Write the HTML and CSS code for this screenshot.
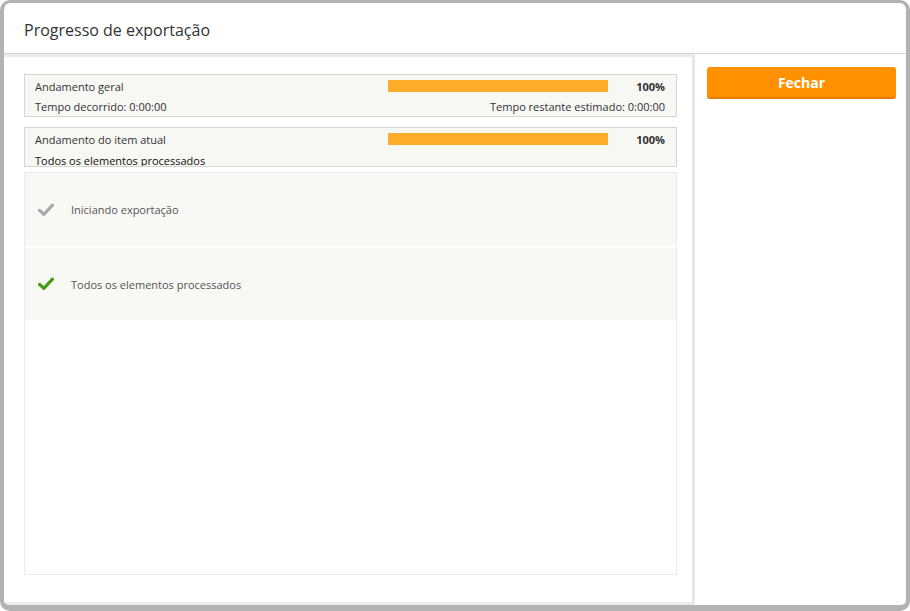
FILE: index.html
```html
<!DOCTYPE html>
<html lang="pt">
<head>
<meta charset="utf-8">
<title>Progresso de exportação</title>
<link rel="stylesheet" href="styles.css">
</head>
<body>
<div class="dialog">
  <div class="header"><h1 class="title">Progresso de exportação</h1></div>
  <div class="body">
    <div class="main">
      <div class="progress-box">
        <div class="line">
          <span class="label">Andamento geral</span>
          <div class="bar"><div class="fill" style="width:100%"></div></div>
          <span class="pct">100%</span>
        </div>
        <div class="line">
          <span class="label">Tempo decorrido: 0:00:00</span>
          <span class="remaining">Tempo restante estimado: 0:00:00</span>
        </div>
      </div>
      <div class="progress-box clipped">
        <div class="line">
          <span class="label">Andamento do item atual</span>
          <div class="bar"><div class="fill" style="width:100%"></div></div>
          <span class="pct">100%</span>
        </div>
        <div class="line low">
          <span class="label dark">Todos os elementos processados</span>
        </div>
      </div>
      <div class="log">
        <div class="log-row">
          <div class="icon-cell">
            <svg class="check grey" viewBox="0 0 16 14" width="16" height="14"><path d="M1.6 7.4 L5.8 11.4 L14.5 2.2" fill="none" stroke="currentColor" stroke-width="3.2" stroke-linejoin="round" stroke-linecap="round"/></svg>
          </div>
          <div class="text-cell">Iniciando exportação</div>
        </div>
        <div class="log-row">
          <div class="icon-cell">
            <svg class="check green" viewBox="0 0 16 14" width="16" height="14"><path d="M1.6 7.4 L5.8 11.4 L14.5 2.2" fill="none" stroke="currentColor" stroke-width="3.2" stroke-linejoin="round" stroke-linecap="round"/></svg>
          </div>
          <div class="text-cell">Todos os elementos processados</div>
        </div>
      </div>
    </div>
    <div class="side">
      <button class="btn-close">Fechar</button>
    </div>
  </div>
</div>
</body>
</html>
```
FILE: styles.css
```css
* { box-sizing: border-box; }
html, body { margin: 0; padding: 0; background: #ffffff; }
body { font-family: "Open Sans", "Noto Sans", sans-serif; color: #333; }

.dialog {
  width: 910px;
  height: 611px;
  border: 4px solid #b3b3b3;
  border-top-width: 3px;
  border-bottom-width: 6px;
  border-radius: 10px;
  background: #fff;
  display: flex;
  flex-direction: column;
  overflow: hidden;
}

.header {
  height: 51px;
  border-bottom: 1px solid #d4d4d4;
  display: flex;
  align-items: center;
  padding-left: 20px;
  flex: none;
}
.title {
  margin: 0;
  font-weight: normal;
  font-size: 16px;
  color: #333;
  padding-top: 3px;
}

.body {
  flex: 1;
  display: flex;
  min-height: 0;
}

.main {
  width: 691px;
  flex: none;
  border-top: 3px solid #ebebeb;
  border-right: 3px solid #e6e6e6;
  border-bottom: 3px solid #ebebeb;
  padding: 17px 15px 27px 20px;
  display: flex;
  flex-direction: column;
}

.progress-box {
  background: #f7f7f3;
  border: 1px solid #d6d6cf;
  padding: 1px 11px 0 10px;
  height: 43px;
  font-size: 11px;
  flex: none;
}
.progress-box + .progress-box { margin-top: 10px; }
.progress-box.clipped { height: 40px; overflow: hidden; }

.line {
  display: flex;
  align-items: center;
  height: 20px;
  white-space: nowrap;
}
.line.low { padding-top: 3px; }
.label { flex: 1; color: #333; }
.label.dark { color: #111; }
.bar {
  width: 220px;
  height: 12px;
  background: #f1f1ec;
  margin-right: 26px;
}
.fill { height: 100%; background: #fcab2a; }
.pct { font-weight: bold; color: #333; width: 31px; text-align: right; }
.remaining { color: #333; }

.log {
  margin-top: 5px;
  flex: 1;
  border: 1px solid #ebebe8;
  background: #fff;
  display: flex;
  flex-direction: column;
  gap: 2px;
}
.log-row {
  display: flex;
  height: 73px;
  background: #f8f8f5;
  flex: none;
}
.log-row + .log-row { height: 72px; }
.icon-cell {
  width: 41px;
  border-right: 1px solid #fdfdfc;
  display: flex;
  align-items: center;
  justify-content: center;
  padding-left: 1px;
}
.text-cell {
  display: flex;
  align-items: center;
  padding-left: 5px;
  font-size: 11px;
  color: #555;
}
.check.grey { color: #a9a9a9; }
.check.green { color: #4a9b12; }

.side {
  flex: 1;
  padding: 13px 10px 0 12px;
}
.btn-close {
  display: block;
  width: 100%;
  height: 32px;
  background: #ff9100;
  border: none;
  border-bottom: 2px solid #e77b00;
  border-radius: 3px;
  color: #fff;
  font-family: "Open Sans", "Noto Sans", sans-serif;
  font-weight: bold;
  font-size: 14px;
  padding: 0;
  cursor: pointer;
}
```
